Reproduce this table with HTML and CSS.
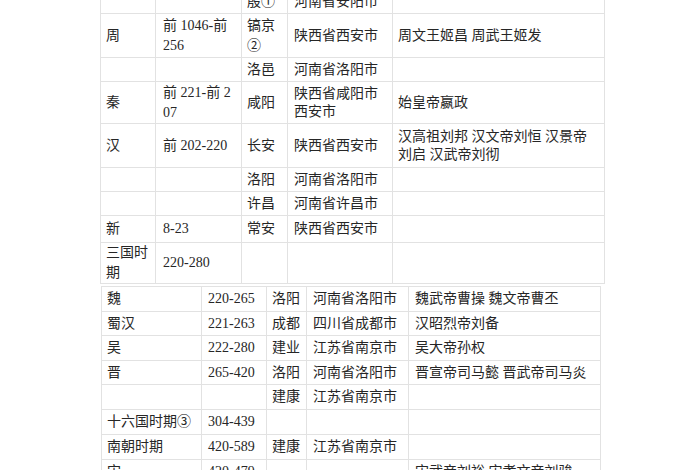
FILE: index.html
```html
<!DOCTYPE html>
<html lang="zh">
<head>
<meta charset="utf-8">
<link rel="stylesheet" href="styles.css">
</head>
<body>
<div class="page">
  <table class="tbl tbl-top">
    <colgroup>
      <col class="t1"><col class="t2"><col class="t3"><col class="t4"><col class="t5">
    </colgroup>
    <tr class="h24"><td></td><td></td><td>殷①</td><td>河南省安阳市</td><td></td></tr>
    <tr class="h44"><td>周</td><td>前 1046-前<br>256</td><td>镐京<br>②</td><td>陕西省西安市</td><td>周文王姬昌 周武王姬发</td></tr>
    <tr class="h24"><td></td><td></td><td>洛邑</td><td>河南省洛阳市</td><td></td></tr>
    <tr class="h42"><td>秦</td><td>前 221-前 2<br>07</td><td>咸阳</td><td>陕西省咸阳市<br>西安市</td><td>始皇帝嬴政</td></tr>
    <tr class="h44"><td>汉</td><td>前 202-220</td><td>长安</td><td>陕西省西安市</td><td>汉高祖刘邦 汉文帝刘恒 汉景帝<br>刘启 汉武帝刘彻</td></tr>
    <tr class="h24"><td></td><td></td><td>洛阳</td><td>河南省洛阳市</td><td></td></tr>
    <tr class="h24"><td></td><td></td><td>许昌</td><td>河南省许昌市</td><td></td></tr>
    <tr class="h27"><td>新</td><td>8-23</td><td>常安</td><td>陕西省西安市</td><td></td></tr>
    <tr class="h41"><td>三国时<br>期</td><td>220-280</td><td></td><td></td><td></td></tr>
  </table>
  <table class="tbl tbl-bottom">
    <colgroup>
      <col class="b1"><col class="b2"><col class="b3"><col class="b4"><col class="b5">
    </colgroup>
    <tr class="h25"><td>魏</td><td>220-265</td><td>洛阳</td><td>河南省洛阳市</td><td>魏武帝曹操 魏文帝曹丕</td></tr>
    <tr class="h24"><td>蜀汉</td><td>221-263</td><td>成都</td><td>四川省成都市</td><td>汉昭烈帝刘备</td></tr>
    <tr class="h25"><td>吴</td><td>222-280</td><td>建业</td><td>江苏省南京市</td><td>吴大帝孙权</td></tr>
    <tr class="h24"><td>晋</td><td>265-420</td><td>洛阳</td><td>河南省洛阳市</td><td>晋宣帝司马懿 晋武帝司马炎</td></tr>
    <tr class="h25"><td></td><td></td><td>建康</td><td>江苏省南京市</td><td></td></tr>
    <tr class="h25"><td>十六国时期③</td><td>304-439</td><td></td><td></td><td></td></tr>
    <tr class="h25"><td>南朝时期</td><td>420-589</td><td>建康</td><td>江苏省南京市</td><td></td></tr>
    <tr class="h25"><td>宋</td><td>420-479</td><td></td><td></td><td>宋武帝刘裕 宋孝文帝刘骏</td></tr>
  </table>
</div>
</body>
</html>
```
FILE: styles.css
```css
html, body {
  margin: 0;
  padding: 0;
  background: #ffffff;
}
body {
  width: 700px;
  height: 470px;
  overflow: hidden;
  font-family: "Liberation Serif", "Noto Sans CJK SC", serif;
  font-size: 14px;
  color: #262626;
}
.page {
  margin-top: -11px;
}
.tbl {
  border-collapse: collapse;
  table-layout: fixed;
}
.tbl td {
  border: 1px solid #e2e2e2;
  padding: 0 4px 0 5px;
  line-height: 20px;
  vertical-align: middle;
  white-space: nowrap;
  overflow: hidden;
}
.tbl-top {
  margin-left: 100px;
  width: 504px;
}
.t1 { width: 55px; }
.t2 { width: 86px; }
.t3 { width: 46px; }
.t4 { width: 105px; }
.t5 { width: 212px; }
.tbl-top td:nth-child(2) { padding-left: 7px; }
.tbl-top td:nth-child(4) { padding-left: 6px; }
.tbl-bottom {
  margin-left: 101px;
  margin-top: 2px;
  width: 499px;
}
.b1 { width: 100px; }
.b2 { width: 65px; }
.b3 { width: 40px; }
.b4 { width: 102px; }
.b5 { width: 192px; }
.tbl-bottom td:nth-child(2) { padding-left: 6px; }
.tbl-bottom td:nth-child(4) { padding-left: 6px; }
.tbl-bottom td:nth-child(5) { padding-left: 6px; }
.h24 { height: 24px; }
.h25 { height: 25px; }
.h27 { height: 27px; }
.h41 { height: 41px; }
.h42 { height: 42px; }
.h44 { height: 44px; }
.tbl-top .h44 td:nth-child(5),
.tbl-top .h42 td:nth-child(4) { line-height: 18px; }
```
